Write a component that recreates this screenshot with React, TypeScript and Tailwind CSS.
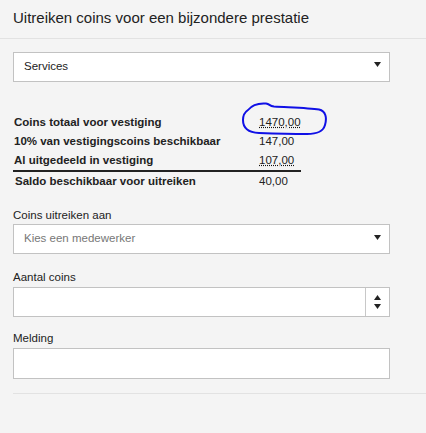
import React from "react";

const Arrow = ({ up = false }: { up?: boolean }) => (
  <svg width="7" height="5" viewBox="0 0 7 5" className="block">
    {up ? <polygon points="0,5 7,5 3.5,0" fill="#222" /> : <polygon points="0,0 7,0 3.5,5" fill="#222" />}
  </svg>
);

const rows = [
  { label: "Coins totaal voor vestiging", value: "1470,00", dotted: true },
  { label: "10% van vestigingscoins beschikbaar", value: "147,00", dotted: false },
  { label: "Al uitgedeeld in vestiging", value: "107,00", dotted: true },
];

export default function App() {
  return (
    <div
      className="w-[426px] h-[433px] bg-[#f4f4f4] text-[#222] overflow-hidden"
      style={{ fontFamily: '"Liberation Sans", Arial, sans-serif' }}
    >
      <div className="h-[39px] border-b border-[#e2e2e2] pl-[13px] flex items-center">
        <h1 className="text-[15px] leading-[18px] text-[#222] pb-[2px]">Uitreiken coins voor een bijzondere prestatie</h1>
      </div>
      <div className="pl-[13px] pt-[13px]">
        <div className="w-[377px] h-[30px] bg-white border border-[#c2c2c2] flex items-center justify-between pl-[10px] pr-[8px]">
          <span className="text-[11.5px]">Services</span>
          <span className="pb-[6px]"><Arrow /></span>
        </div>

        <div className="relative mt-[31px] w-[288px] text-[11.5px]">
          {rows.map((r) => (
            <div key={r.label} className="flex h-[19px] items-center">
              <span className="w-[246px] pl-[1px] font-bold">{r.label}</span>
              <span className={r.dotted ? "underline decoration-dotted decoration-[#111] underline-offset-[1px]" : ""}>{r.value}</span>
            </div>
          ))}
          <div className="h-[2px] bg-[#222]" />
          <div className="flex h-[19px] items-center">
            <span className="w-[246px] pl-[2px] font-bold">Saldo beschikbaar voor uitreiken</span>
            <span>40,00</span>
          </div>
          <svg
            className="absolute left-[226px] top-[-11px] pointer-events-none"
            width="92"
            height="38"
            viewBox="0 0 92 38"
          >
            <path
              d="M9 8 C 13 3, 20 1, 27 1.5 C 31 2, 30 4, 35 4.5 C 52 5.5, 70 6, 80 7.5 C 87 9, 88 16, 86 23 C 84 30, 78 32, 68 32 C 52 32, 34 31.5, 20 31 C 9 30.5, 4 26, 4 18 C 4 12, 6 10, 9 8"
              fill="none"
              stroke="#1010e6"
              strokeWidth="2"
              strokeLinecap="round"
            />
          </svg>
        </div>

        <div className="mt-[17px] text-[11.5px] leading-[14px]">Coins uitreiken aan</div>
        <div className="mt-[2px] w-[377px] h-[30px] bg-white border border-[#c2c2c2] flex items-center justify-between pl-[10px] pr-[8px]">
          <span className="text-[11.5px] text-[#777]">Kies een medewerker</span>
          <span className="pb-[4px]"><Arrow /></span>
        </div>

        <div className="mt-[16px] text-[11.5px] leading-[14px]">Aantal coins</div>
        <div className="mt-[3px] w-[377px] h-[30px] bg-white border border-[#c2c2c2] flex">
          <div className="flex-1" />
          <div className="w-[24px] border-l border-[#c8c8c8] flex flex-col items-center justify-center gap-[4px]">
            <Arrow up />
            <Arrow />
          </div>
        </div>

        <div className="mt-[14px] text-[11.5px] leading-[14px]">Melding</div>
        <div className="mt-[3px] w-[377px] h-[31px] bg-white border border-[#c2c2c2]" />

        <div className="mt-[14px] h-px bg-[#e2e2e2]" />
      </div>
    </div>
  );
}
